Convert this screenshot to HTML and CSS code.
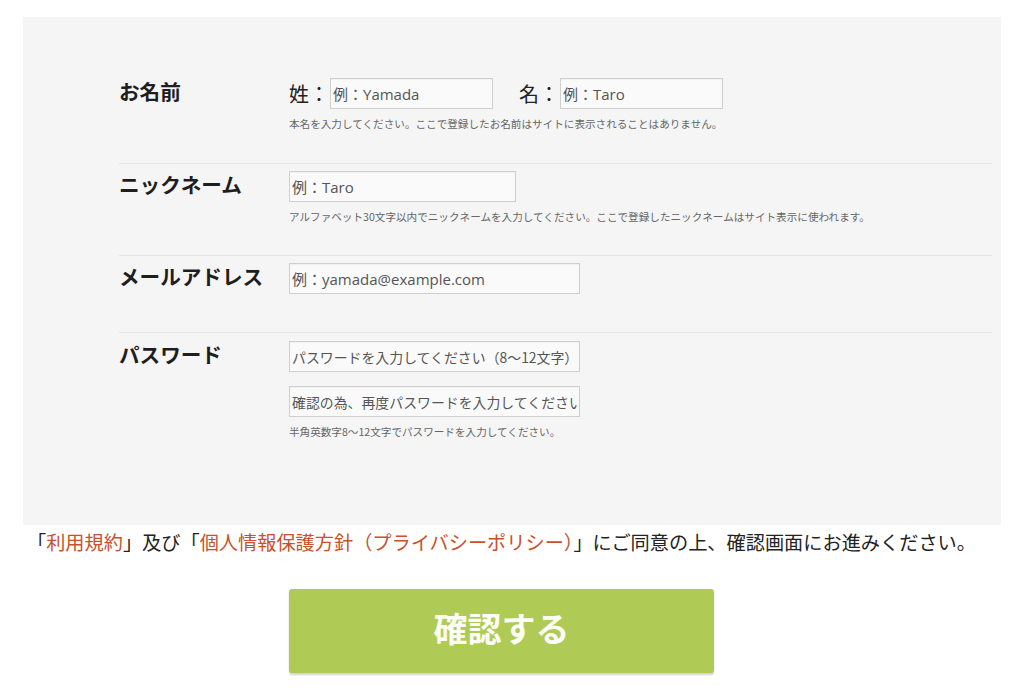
FILE: index.html
```html
<!DOCTYPE html>
<html lang="ja">
<head>
<meta charset="utf-8">
<title>会員登録</title>
<link rel="stylesheet" href="styles.css">
</head>
<body>
<div class="page">
  <form class="panel">
    <div class="row">
      <div class="label">お名前</div>
      <div class="field">
        <div class="name-line">
          <span class="name-part">姓：</span>
          <input class="input input-name" type="text" placeholder="例：Yamada">
          <span class="name-part name-gap">名：</span>
          <input class="input input-name" type="text" placeholder="例：Taro">
        </div>
        <p class="help">本名を入力してください。ここで登録したお名前はサイトに表示されることはありません。</p>
      </div>
    </div>
    <div class="row">
      <div class="label">ニックネーム</div>
      <div class="field">
        <input class="input input-nick" type="text" placeholder="例：Taro">
        <p class="help">アルファベット30文字以内でニックネームを入力してください。ここで登録したニックネームはサイト表示に使われます。</p>
      </div>
    </div>
    <div class="row row-email">
      <div class="label">メールアドレス</div>
      <div class="field">
        <input class="input input-wide" type="text" placeholder="例：yamada@example.com">
      </div>
    </div>
    <div class="row row-last">
      <div class="label">パスワード</div>
      <div class="field">
        <input class="input input-wide input-jp" type="password" placeholder="パスワードを入力してください（8〜12文字）">
        <input class="input input-wide input-jp input-confirm" type="password" placeholder="確認の為、再度パスワードを入力してください">
        <p class="help">半角英数字8〜12文字でパスワードを入力してください。</p>
      </div>
    </div>
  </form>
  <div class="footer">
    <p class="agree">「<a class="link" href="#">利用規約</a>」及び「<a class="link" href="#">個人情報保護方針（プライバシーポリシー）</a>」にご同意の上、確認画面にお進みください。</p>
    <button class="submit" type="button">確認する</button>
  </div>
</div>
</body>
</html>
```
FILE: styles.css
```css
* { box-sizing: border-box; }
html, body {
  margin: 0;
  padding: 0;
  background: #ffffff;
}
body {
  font-family: "Noto Sans CJK JP", "Open Sans", sans-serif;
  color: #222222;
}
.page {
  width: 1023px;
  height: 700px;
  overflow: hidden;
  padding-top: 17px;
}
.panel {
  margin: 0 0 0 23px;
  width: 978px;
  height: 508px;
  background: #f5f5f5;
  padding: 61px 9px 0 96px;
}
.row {
  display: grid;
  grid-template-columns: 170px 1fr;
  padding: 7px 0 31px;
  border-bottom: 1px solid #e5e5e5;
}
.row:first-child { padding-top: 0; padding-bottom: 32px; }
.row-email { padding-bottom: 38px; }
.row-last { border-bottom: none; padding-top: 8px; }
.label {
  font-size: 20.6px;
  font-weight: 700;
  line-height: 26px;
  color: #1e1e1e;
}
.field {
  display: flex;
  flex-direction: column;
  align-items: flex-start;
}
.name-line {
  display: flex;
  align-items: center;
}
.name-part {
  font-size: 20px;
  line-height: 31px;
  color: #222;
  width: 41px;
}
.name-gap { margin-left: 26px; }
.input {
  height: 31px;
  border: 1px solid #cfcfcf;
  background: #fafafa;
  font-family: "Open Sans", "Noto Sans CJK JP", sans-serif;
  font-size: 15px;
  color: #555;
  padding: 0 2px;
  box-shadow: inset 0 1px 1px rgba(0,0,0,0.04);
}
.input::placeholder { color: #555; opacity: 1; }
.input-jp {
  font-family: "Noto Sans CJK JP", sans-serif;
  font-size: 13.9px;
}
.input-name { width: 163px; }
.input-nick { width: 227px; }
.input-wide { width: 291px; }
.input-confirm { margin-top: 14px; }
.help {
  margin: 7px 0 0;
  font-size: 10.6px;
  line-height: 15px;
  color: #666;
}
.footer {
  width: 1003px;
  text-align: center;
}
.agree {
  margin: 7px 0 0;
  font-size: 19.2px;
  line-height: 20px;
  color: #222;
}
.link {
  color: #c8502a;
  text-decoration: none;
}
.submit {
  margin-top: 37px;
  width: 425px;
  height: 84px;
  border: none;
  border-radius: 3px;
  background: #b0cb55;
  box-shadow: 0 2px 2px rgba(0,0,0,0.18);
  color: #fbfcf5;
  font-family: "Noto Sans CJK JP", sans-serif;
  font-size: 34px;
  font-weight: 700;
  padding: 0 0 8px;
  cursor: pointer;
}
```
